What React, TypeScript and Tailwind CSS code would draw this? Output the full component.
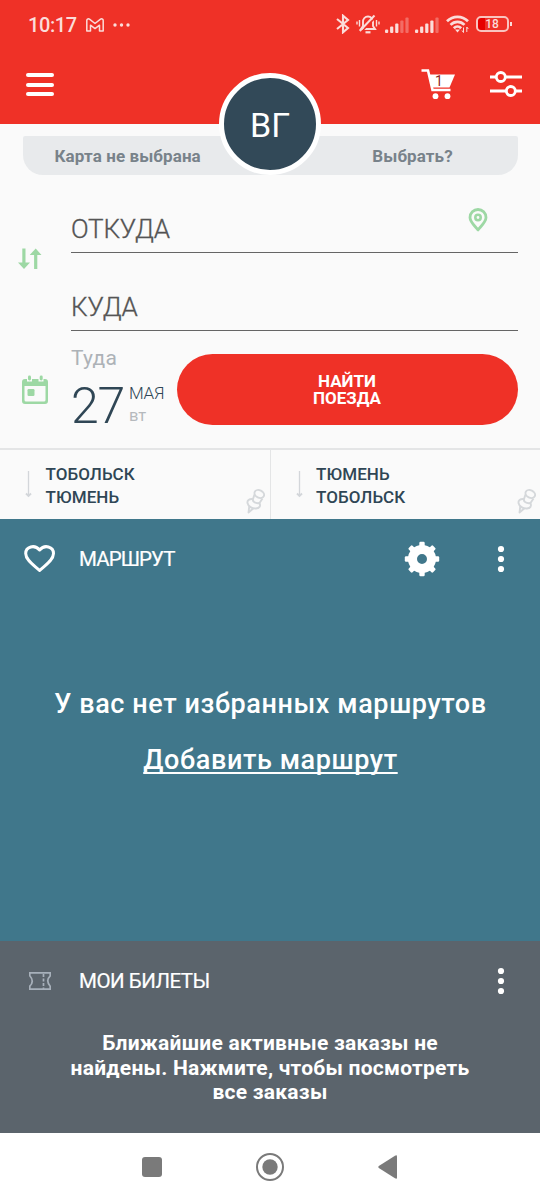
import React from "react";

function Bluetooth() {
  return (
    <svg className="ml-[335.500px] shrink-0" width="14" height="20" viewBox="0 0 14 20" fill="none" stroke="#fbdcd9" strokeWidth="2.100">
      <path d="M1 5 12 14 7 18.300V1.700L12 6 1 15" />
    </svg>
  );
}

function MutedBell() {
  return (
    <svg width="24" height="20" viewBox="0 0 24 20" fill="none" stroke="#fbdcd9" strokeWidth="1.900">
      <path d="M5 15h14l-2-3V8c0-3-2-5.500-5-5.500S7 5 7 8v4z" />
      <path d="M9.500 18.300h5" strokeWidth="2.200" />
      <path d="M1 7.500v3M3.500 6v6.500M23 7.500v3M20.500 6v6.500" strokeWidth="1.400" />
      <path d="M5.700 17.500 20 3" stroke="#ef3127" strokeWidth="1.600" />
      <path d="M3.800 17 18.500 1.500" strokeWidth="2" />
    </svg>
  );
}

function Signal({ level }: { level: number }) {
  return (
    <svg width="24" height="16" viewBox="0 0 24 16">
      {[0, 1, 2, 3, 4].map((i) => (
        <rect key={i} x={i * 5.1} y={12.5 - i * 3} width="3.200" height={3.5 + i * 3} rx="1" fill="#fbdcd9" opacity={i < level ? 1 : 0.35} />
      ))}
    </svg>
  );
}

function Wifi() {
  return (
    <svg width="24" height="18" viewBox="0 0 24 18" fill="none" stroke="#fbdcd9" strokeWidth="2.700">
      <path d="M1 6.300C7 .3 16 .3 22 6.300M4.500 9.900c4-4 10-4 14 0M7.800 13.200c2.200-2.200 5.200-2.200 7.400 0" />
      <path d="m9 14.500 2.500 3 2.500-3z" fill="#fbdcd9" stroke="none" />
      <path d="M17.500 12.500v5l-1.500-2M20.800 17v-5l1.500 2" strokeWidth="1" />
    </svg>
  );
}

function Cart() {
  return (
    <div className="relative -left-px h-8 w-[34px]">
      <svg width="34" height="32" viewBox="0 0 34 32">
        <path d="M.5 2.500H7L11.500 22H29.500" fill="none" stroke="#fff" strokeWidth="2.600" />
        <path d="M8 6.500h26l-5.500 13H11z" fill="#fff" />
        <circle cx="14.500" cy="28.200" r="2.900" fill="#fff" />
        <circle cx="26.500" cy="28.200" r="2.900" fill="#fff" />
      </svg>
      <span className="absolute left-[14px] top-[5px] text-[14px] leading-[16px] text-[#8e2722]">1</span>
    </div>
  );
}

function Arrow() {
  return (
    <svg className="ml-6 mt-[21px] shrink-0" width="9" height="27" viewBox="0 0 9 27" fill="none" stroke="#d3d6da" strokeWidth="1.300">
      <path d="M4.500 0v25" /><path d="M2 22.500 4.500 25 7 22.500" strokeWidth="1.800" />
    </svg>
  );
}

function Pin() {
  return (
    <svg className="mt-auto mb-[5px] shrink-0" width="20" height="25" viewBox="0 0 20 25" fill="none" stroke="#d5d8db" strokeWidth="1.900" strokeLinejoin="round">
      <ellipse cx="13.300" cy="5" rx="5" ry="3.700" transform="rotate(25 13.300 5)" />
      <path d="M8.500 5.500 7 10C3 9.600 1 11.600 1.500 14c.7 3.300 4.500 5.800 8.500 5.500 3.200-.2 5-2.300 3.500-5.500l3-4.500" />
      <path d="M7 10c-.8 2.500 2.500 4.800 6.500 4M3.300 17.200 2.500 23.500l5-4.300" />
    </svg>
  );
}

function Dots() {
  return (
    <svg className="shrink-0" width="8" height="28" viewBox="0 0 8 28" fill="#fff">
      <circle cx="4" cy="4" r="3.100" /><circle cx="4" cy="14" r="3.100" /><circle cx="4" cy="24" r="3.100" />
    </svg>
  );
}

function Route({ from, to }: { from: string; to: string }) {
  return (
    <div className="flex flex-1">
      <Arrow />
      <div className="ml-[12.500px] mt-[13px] grow whitespace-nowrap text-[17px] font-medium leading-[23px] tracking-[0.080px] text-[#2f4655]">
        <div>{from}</div>
        <div>{to}</div>
      </div>
      <Pin />
      <div className="w-[3.500px] shrink-0" />
    </div>
  );
}

export default function App() {
  return (
    <div className="flex h-[1200px] w-[540px] flex-col overflow-hidden bg-[#fafafa] font-['Roboto',sans-serif]">
      <header className="h-[124px] shrink-0 bg-[#ef3127] text-white">
        <div className="grid h-12 items-center [&>*]:col-start-1 [&>*]:row-start-1">
          <div className="flex items-center pl-7 pt-[2px] text-[#fbdcd9]">
            <span className="w-[58px] text-[20px] leading-6 tracking-[-0.4px] font-medium">10:17</span>
            <svg width="18" height="14" viewBox="0 0 18 14" fill="none" stroke="#fbdcd9" strokeWidth="1.500" strokeLinejoin="round">
              <path d="M.8 13V2.500C.8.8 2.500.4 3.800 1.400L9 5.500l5.200-4.100c1.300-1 3-.6 3 1.100V13h-3.700V7.200L9 10.600 4.500 7.200V13z" />
            </svg>
            <svg className="ml-[9px]" width="17" height="4" viewBox="0 0 17 4" fill="#fbdcd9">
              <circle cx="2" cy="2" r="1.700" /><circle cx="8.500" cy="2" r="1.700" /><circle cx="15" cy="2" r="1.700" />
            </svg>
          </div>
          <div className="flex items-center">
            <Bluetooth />
            <div className="ml-[6px]"><MutedBell /></div>
            <div className="ml-[5px] mt-[2px]"><Signal level={3} /></div>
            <div className="ml-[6px] mt-[2px]"><Signal level={4} /></div>
            <div className="ml-[7px]"><Wifi /></div>
            <div className="ml-[6px] flex h-4 w-[33px] items-center justify-center rounded-[5px] border-2 border-[#f9c4bf] bg-[linear-gradient(90deg,#e60000_0_7px,transparent_7px)] text-[12px] font-medium leading-3 text-[#fbdcd9]">18</div>
            <div className="ml-px h-1 w-[2px] bg-[#fbdcd9]" />
          </div>
        </div>
        <div className="flex pl-[25.500px] pt-[20px]">
          <div className="mt-[5px] flex w-[28px] flex-col gap-[5.500px]">
            <div className="h-[4px] rounded-full bg-white" />
            <div className="h-[4px] rounded-full bg-white" />
            <div className="h-[4px] rounded-full bg-white" />
          </div>
          <div className="ml-[368.500px]"><Cart /></div>
          <svg className="ml-[34px] mt-[3px]" width="32" height="26" viewBox="0 0 32 26" fill="none" stroke="#fff" strokeWidth="2.800">
            <path d="M0 6h6.500M15 6h17M0 20h16.500M25 20h7" />
            <circle cx="10.800" cy="6" r="4.500" /><circle cx="20.800" cy="20" r="4.500" />
          </svg>
        </div>
      </header>

      <section className="relative mx-[22.500px] mt-[12px] flex h-[39px] shrink-0 rounded-b-[20px] rounded-t-[2px] bg-[#e8eaec] text-[17px] font-bold leading-[41px] text-[#78828a]">
        <div className="whitespace-nowrap pl-8 tracking-[0.1px]">Карта не выбрана</div>
        <div className="ml-[171.500px] tracking-[0.1px]">Выбрать?</div>
        <div className="absolute -top-[63px] left-[196.500px] flex size-[102px] items-center justify-center rounded-full border-[5px] border-white bg-[#324958] text-[34px] font-normal text-white"><span className="pt-[2px]">ВГ</span></div>
      </section>

      <section className="grid h-[273px] shrink-0 grid-cols-[71px_1fr]">
        <div className="flex flex-col">
          <svg className="ml-[18px] mt-[73px]" width="24" height="22" viewBox="0 0 24 22" fill="#9dd8a4">
            <path d="M4.300 0.500h3.200v14H12L6 21 0 14.500h4.300zM16.100 21h3.200V7h4.200L17.700 0.500l-6 6.500h4.400z" />
          </svg>
          <svg className="ml-[22px] mt-[105px]" width="27" height="30" viewBox="0 0 27 30">
            <path d="M3 4h2v2.500h5V4h6.500v2.500h5V4H23a3 3 0 0 1 3 3v19a3 3 0 0 1-3 3H3a3 3 0 0 1-3-3V7a3 3 0 0 1 3-3zM2.500 11v14a1.500 1.500 0 0 0 1.500 1.500h18a1.500 1.500 0 0 0 1.500-1.500V11z" fill="#9dd8a4" fillRule="evenodd" />
            <rect x="6" y="0.500" width="3" height="5" rx="1.400" fill="#9dd8a4" />
            <rect x="17.700" y="0.500" width="3" height="5" rx="1.400" fill="#9dd8a4" />
            <rect x="5.500" y="14" width="7" height="7" rx="1.200" fill="#9dd8a4" />
          </svg>
        </div>
        <div className="mr-[22.500px]">
          <div className="flex h-[78px] items-end justify-between border-b-[1.500px] border-[#656565]">
            <div className="mb-[8px] text-[26px] font-light leading-[30px] tracking-[-0.2px] text-[#505050] [-webkit-text-stroke:0.35px_#606060]">ОТКУДА</div>
            <svg className="mb-[20px] mr-[29.500px]" width="20" height="24" viewBox="0 0 20 24" fill="none" stroke="#9dd8a4" strokeWidth="2.800">
              <path d="M10 22C7 18 2 14 2 9.500a8 8 0 0 1 16 0C18 14 13 18 10 22z" strokeLinejoin="round" />
              <circle cx="10" cy="9.500" r="2.700" strokeWidth="2.600" />
            </svg>
          </div>
          <div className="flex h-[78px] items-end border-b-[1.500px] border-[#656565]">
            <div className="mb-[8px] text-[26px] font-light leading-[30px] tracking-[-0.1px] text-[#505050] [-webkit-text-stroke:0.35px_#606060]">КУДА</div>
          </div>
          <div className="flex">
            <div className="w-[105.500px] pt-[15px]">
              <div className="text-[21px] leading-6 tracking-[0.2px] text-[#adb2b7]">Туда</div>
              <div className="flex pt-[10px]">
                <div className="w-[58px] text-[50px] font-light leading-[52px] tracking-[-1.2px] text-[#2f4655]">27</div>
                <div className="whitespace-nowrap pt-[3px]">
                  <div className="text-[17px] font-light leading-5 tracking-[-0.3px] text-[#2f4655]">МАЯ</div>
                  <div className="pt-[3px] text-[16.500px] leading-5 text-[#b5b9bd]">вт</div>
                </div>
              </div>
            </div>
            <div className="mt-[23px] flex h-[71px] flex-1 items-center justify-center rounded-full bg-[#ef3127] text-center text-[17px] font-bold leading-[17px] text-white">НАЙТИ<br />ПОЕЗДА</div>
          </div>
        </div>
      </section>

      <section className="flex h-[71px] shrink-0 divide-x divide-[#e4e5e6] border-t-2 border-[#e4e5e6]">
        <Route from="ТОБОЛЬСК" to="ТЮМЕНЬ" />
        <Route from="ТЮМЕНЬ" to="ТОБОЛЬСК" />
      </section>

      <section className="h-[422px] shrink-0 bg-[#40778b] text-white">
        <div className="flex h-20 items-center pl-6 pr-[35.500px]">
          <svg width="32" height="28" viewBox="0 0 32 28" fill="none" stroke="#fff" strokeWidth="3" strokeLinejoin="round">
            <path d="M15.600 25.500C11 21 1.700 15.500 1.700 8.500 1.700 1.700 10.500-1 15.600 5 20.700-1 29.500 1.700 29.500 8.500c0 7-9.300 12.500-13.900 17z" />
          </svg>
          <div className="ml-[23px] w-[324.500px] text-[20.500px] leading-6 tracking-[-0.9px] [-webkit-text-stroke:0.2px_white]">МАРШРУТ</div>
          <svg className="shrink-0" width="36" height="36" viewBox="-18 -18 36 36">
            <circle r="9.500" fill="none" stroke="#fff" strokeWidth="9" />
            {[0, 45, 90, 135, 180, 225, 270, 315].map((a) => (
              <rect key={a} x="-2.700" y="-17.200" width="5.400" height="6" rx="1.200" fill="#fff" transform={`rotate(${a})`} />
            ))}
          </svg>
          <div className="ml-auto"><Dots /></div>
        </div>
        <div className="pt-[87px] text-center text-[27px] font-medium leading-9 tracking-[0.6px]">
          <div className="whitespace-nowrap pl-px">У вас нет избранных маршрутов</div>
          <div className="pl-px pt-5"><span className="underline decoration-[1.500px] underline-offset-[3px] [text-decoration-skip-ink:none]">Добавить маршрут</span></div>
        </div>
      </section>

      <section className="h-[192px] shrink-0 bg-[#5b646c] text-white">
        <div className="flex h-20 items-center pl-[29px] pr-[35.500px]">
          <svg width="22" height="18" viewBox="0 0 22 18" fill="none" stroke="#a7b0ba" strokeWidth="1.700">
            <path d="M.8.8h20.400v3c-3 3-3 7 0 10.400v3H.8v-3c3-3 3-7 0-10.400z" /><path d="M14.500 2v15" strokeDasharray="3 1.500" />
          </svg>
          <div className="ml-[28px] text-[20.500px] leading-6 tracking-[-0.5px] [-webkit-text-stroke:0.2px_white]">МОИ БИЛЕТЫ</div>
          <div className="ml-auto"><Dots /></div>
        </div>
        <p className="whitespace-nowrap pt-[10px] text-center text-[21px] font-bold leading-[24.500px] tracking-[0.24px]">
          Ближайшие активные заказы не<br />найдены. Нажмите, чтобы посмотреть<br />все заказы
        </p>
      </section>

      <nav className="flex grow items-center bg-white pb-0 pl-[142px]">
        <div className="size-5 rounded-[3px] bg-[#7a7a7a]" />
        <svg className="ml-[94px]" width="28" height="28" viewBox="0 0 28 28">
          <circle cx="14" cy="14" r="13" fill="none" stroke="#7a7a7a" strokeWidth="2" /><circle cx="14" cy="14" r="7.700" fill="#7a7a7a" />
        </svg>
        <svg className="ml-[94px]" width="20" height="24" viewBox="0 0 20 24" fill="#7a7a7a">
          <path d="M.8 11Q-.2 12 .8 13L17 23.300Q19 24.500 19 22.500v-21Q19-.5 17 .7z" />
        </svg>
      </nav>
    </div>
  );
}
